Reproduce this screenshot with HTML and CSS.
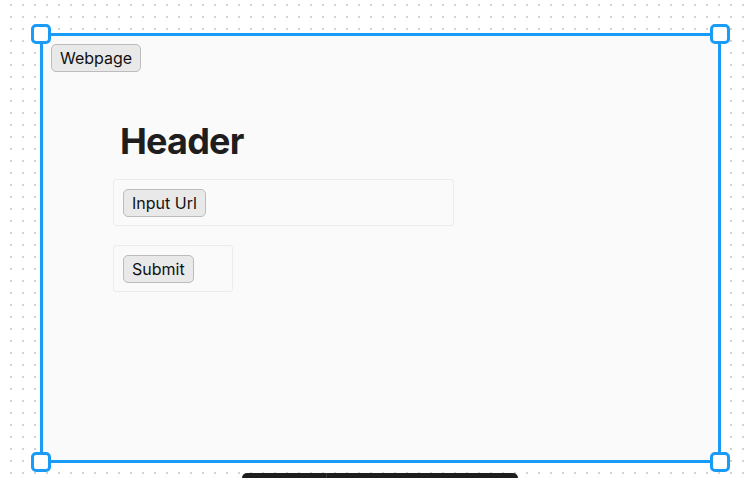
FILE: index.html
```html
<!DOCTYPE html>
<html>
<head>
<meta charset="utf-8">
<link rel="stylesheet" href="styles.css">
</head>
<body>
<div class="canvas">
  <div class="frame">
    <span class="handle h-tl"></span>
    <span class="handle h-tr"></span>
    <span class="handle h-bl"></span>
    <span class="handle h-br"></span>
    <div class="frame-inner">
      <button class="btn tag">Webpage</button>
      <div class="content">
        <h1 class="title">Header</h1>
        <div class="box box-wide"><button class="btn">Input Url</button></div>
        <div class="box box-narrow"><button class="btn">Submit</button></div>
      </div>
    </div>
  </div>
  <div class="toolbar"><span class="toolbar-sep"></span></div>
</div>
</body>
</html>
```
FILE: styles.css
```css
html, body {
  margin: 0;
  padding: 0;
  width: 747px;
  height: 478px;
  overflow: hidden;
}
body {
  background-color: #ffffff;
  background-image: radial-gradient(circle, #d2d2d2 0.9px, transparent 1.2px);
  background-size: 12px 12px;
  background-position: 5px -1px;
  font-family: Inter, "Liberation Sans", sans-serif;
}
.canvas {
  position: relative;
  width: 747px;
  height: 478px;
  padding: 33px 0 0 40px;
  box-sizing: border-box;
  overflow: hidden;
}
.frame {
  position: relative;
  width: 681px;
  height: 430px;
  box-sizing: border-box;
  border: 3px solid #1a9bf8;
  background: #fafafa;
}
.handle {
  position: absolute;
  width: 20px;
  height: 20px;
  box-sizing: border-box;
  border: 3px solid #1a9bf8;
  border-radius: 5px;
  background: #fff;
  z-index: 2;
}
.h-tl { left: -12px; top: -12px; }
.h-tr { right: -12px; top: -12px; }
.h-bl { left: -12px; bottom: -12px; }
.h-br { right: -12px; bottom: -12px; }
.frame-inner {
  padding: 8px;
}
.btn {
  font-family: Inter, "Liberation Sans", sans-serif;
  font-size: 16px;
  color: #111;
  background: #e9e9e9;
  border: 1px solid #bcbcbc;
  border-radius: 5px;
  padding: 0 8px;
  height: 28px;
  margin: 0;
  line-height: 26px;
}
.tag {
  display: block;
}
.content {
  padding-left: 62px;
  display: flex;
  flex-direction: column;
  align-items: flex-start;
}
.title {
  font-size: 36px;
  font-weight: 700;
  color: #1e1e1e;
  margin: 47px 0 0 7px;
  line-height: 44px;
  letter-spacing: -0.8px;
}
.box {
  box-sizing: border-box;
  border: 1px solid #ececec;
  border-radius: 3px;
  padding: 9px;
  height: 47px;
}
.box-wide {
  width: 341px;
  margin-top: 16px;
}
.box-narrow {
  width: 120px;
  margin-top: 19px;
}
.toolbar {
  position: absolute;
  left: 242px;
  top: 473px;
  width: 276px;
  height: 5px;
  background: #1e1e1e;
  border-radius: 9px 9px 0 0;
}
.toolbar-sep {
  position: absolute;
  left: 84px;
  top: 0;
  width: 1px;
  height: 5px;
  background: #3a3a3a;
}
```
